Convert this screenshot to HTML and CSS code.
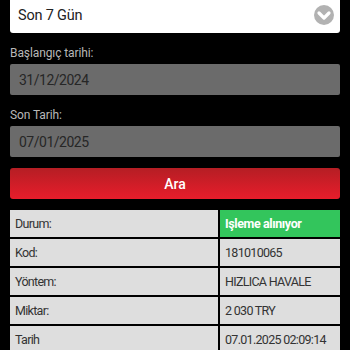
FILE: index.html
```html
<!DOCTYPE html>
<html lang="tr">
<head>
<meta charset="utf-8">
<link rel="stylesheet" href="styles.css">
</head>
<body>
<div class="page">
  <div class="select">
    <span class="select-text">Son 7 Gün</span>
    <svg class="chev" width="20" height="20" viewBox="0 0 20 20">
      <circle cx="10" cy="10" r="10" fill="#b2b2b2"/>
      <path d="M5 8 L10 13 L15 8" fill="none" stroke="#fff" stroke-width="3.2" stroke-linecap="round" stroke-linejoin="round"/>
    </svg>
  </div>
  <div class="field">
    <div class="label">Başlangıç tarihi:</div>
    <div class="input">31/12/2024</div>
  </div>
  <div class="field">
    <div class="label">Son Tarih:</div>
    <div class="input">07/01/2025</div>
  </div>
  <div class="button">Ara</div>
  <div class="table">
    <div class="cell">Durum:</div><div class="cell status">Işleme alınıyor</div>
    <div class="cell">Kod:</div><div class="cell">181010065</div>
    <div class="cell">Yöntem:</div><div class="cell">HIZLICA HAVALE</div>
    <div class="cell">Miktar:</div><div class="cell">2 030 TRY</div>
    <div class="cell">Tarih</div><div class="cell">07.01.2025 02:09:14</div>
  </div>
</div>
</body>
</html>
```
FILE: styles.css
```css
html, body {
  margin: 0;
  padding: 0;
  background: #000;
  font-family: Roboto, "Noto Sans", sans-serif;
  overflow: hidden;
}
.page {
  margin-top: -3px;
  padding: 0 10px;
}
.select {
  height: 36px;
  background: #fff;
  border-radius: 3px;
  display: flex;
  align-items: center;
  justify-content: space-between;
  padding: 0 6px 0 8px;
}
.select-text {
  font-size: 14.5px;
  color: #222;
  letter-spacing: -0.2px;
}
.chev {
  display: block;
  margin-top: -1px;
}
.field {
  margin-top: 12px;
}
.label {
  font-size: 12px;
  line-height: 16px;
  color: #b8b8b8;
  margin-bottom: 3px;
  letter-spacing: -0.1px;
}
.input {
  height: 31px;
  background: #6b6b6b;
  border-radius: 2px;
  display: flex;
  align-items: center;
  padding-left: 9px;
  font-size: 14px;
  color: #262626;
  letter-spacing: -0.5px;
}
.button {
  margin-top: 11px;
  height: 31px;
  border-radius: 3px;
  background: linear-gradient(#b51e24, #e81d2b);
  display: flex;
  align-items: center;
  justify-content: center;
  color: #fff;
  font-size: 14px;
  font-weight: 500;
}
.table {
  margin-top: 11px;
  display: grid;
  grid-template-columns: 208px 1fr;
  grid-auto-rows: 27px;
  gap: 2px;
}
.cell {
  background: #dedede;
  display: flex;
  align-items: center;
  padding: 0 5px;
  font-size: 12.5px;
  color: #333;
  letter-spacing: -0.7px;
  white-space: nowrap;
}
.cell.status {
  background: #33c55c;
  color: #fff;
  font-weight: 700;
  letter-spacing: -0.4px;
}
```
